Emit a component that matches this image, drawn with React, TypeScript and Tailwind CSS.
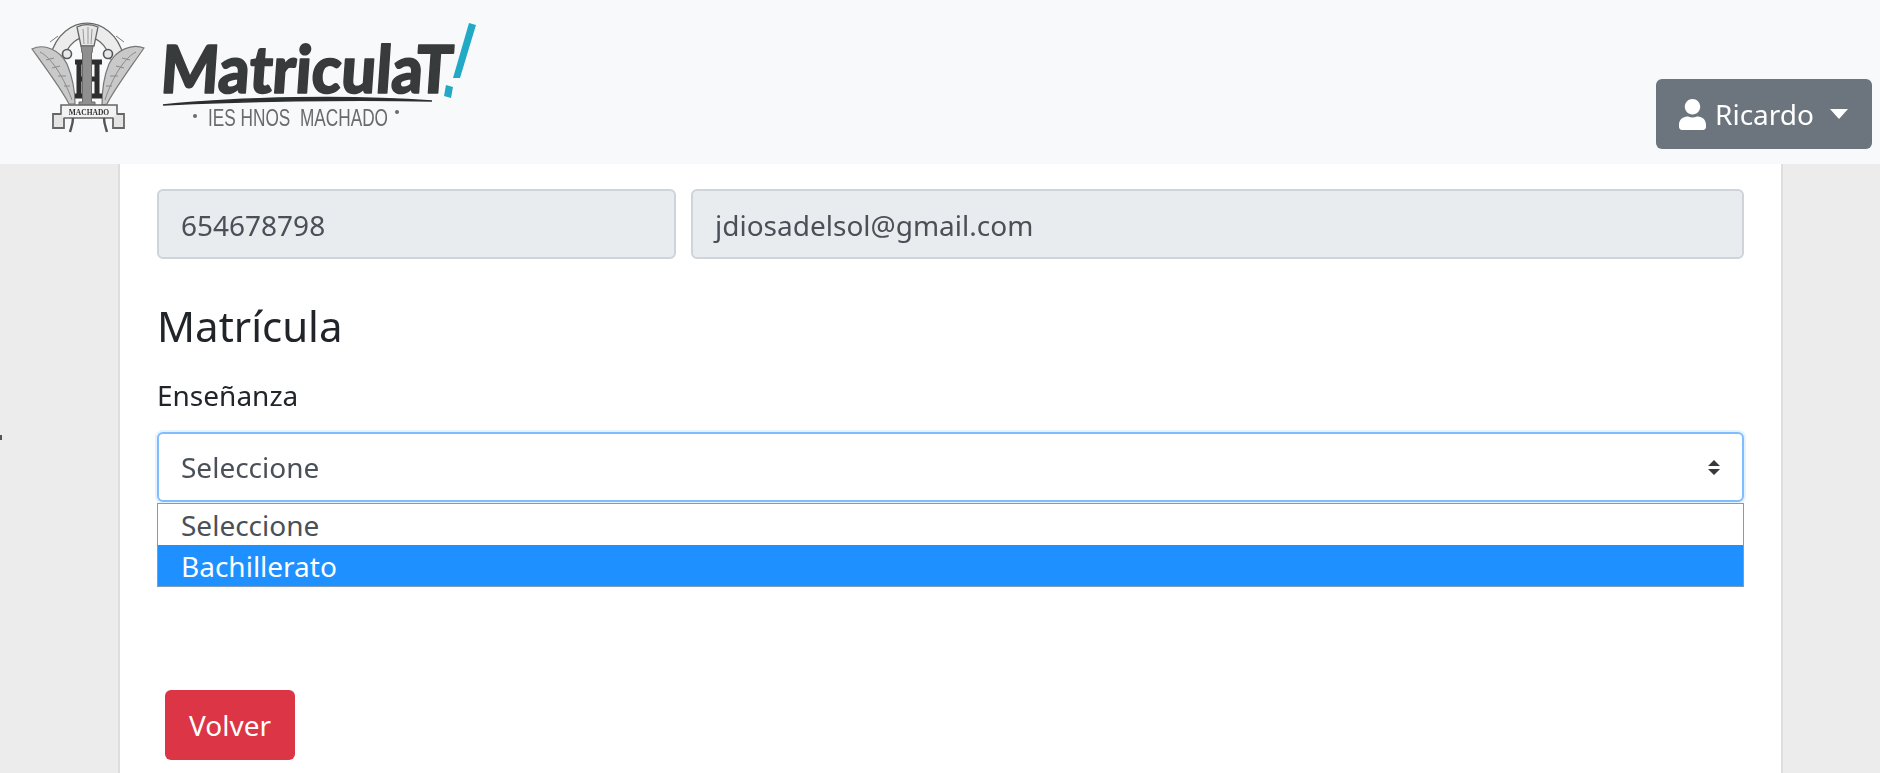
import { FaUser } from "react-icons/fa";

const font = "font-['Noto_Sans','Open_Sans',sans-serif]";

function Logo() {
  return (
    <svg width="490" height="164" viewBox="0 0 490 164" className="block">
      <defs>
        <filter id="soft">
          <feGaussianBlur stdDeviation="0.5" />
        </filter>
      </defs>
      <g filter="url(#soft)">
        {/* escudo */}
        <path d="M57 58 C62 38 76 30 87 30 C98 30 112 38 117 58" fill="none" stroke="#6a6a6a" strokeWidth="15" />
        <path d="M57 58 C62 38 76 30 87 30 C98 30 112 38 117 58" fill="none" stroke="#ececec" strokeWidth="12.5" />
        <path d="M50 42 L58 36 M124 42 L116 36" stroke="#777" strokeWidth="1" />
        <circle cx="67" cy="54" r="4.5" fill="#e8e8e8" stroke="#555" strokeWidth="1.6" />
        <circle cx="108" cy="54" r="4.5" fill="#e8e8e8" stroke="#555" strokeWidth="1.6" />
        <path d="M77 27 C83 24 91 24 98 27 L94 46 L81 46 Z" fill="#e6e6e6" stroke="#666" strokeWidth="1.3" />
        <path d="M83 29 L84 44 M88 27 V44 M92 29 L91 44" stroke="#999" strokeWidth="1" />

        <path d="M32 49 C44 43 60 50 67 64 C72 76 75 90 75 104 L69 104 C62 90 50 74 32 49 Z" fill="#c9c9c9" stroke="#777" strokeWidth="1.2" />
        <path d="M144 48 C132 43 116 50 109 64 C104 76 102 90 102 105 L107 104 C114 90 126 74 144 48 Z" fill="#c9c9c9" stroke="#777" strokeWidth="1.2" />
        <path d="M40 52 C52 58 64 78 72 100 M46 60 L54 58 M52 68 L60 66 M58 76 L66 76 M64 86 L70 86" fill="none" stroke="#8a8a8a" strokeWidth="1" />
        <path d="M136 52 C124 58 112 78 105 100 M130 60 L122 58 M124 68 L116 66 M118 76 L110 76 M112 86 L106 86" fill="none" stroke="#8a8a8a" strokeWidth="1" />

        <path d="M75 62 H85 M75 96 H85 M79 62 V96 M92 62 H102 M92 96 H102 M97 62 V96 M79 79 H97" stroke="#2f2f2f" strokeWidth="5" fill="none" />
        <path d="M81 46 H93 L92 53 H91.5 V102 H95 V106 H79 V102 H82.5 V53 H82 Z" fill="#8f8f8f" stroke="#6a6a6a" strokeWidth="1" />

        <path d="M61 105 H117 V118 H61 Z" fill="#f3f3f3" stroke="#666" strokeWidth="1.6" />
        <path d="M61 114 H53 V128 H64 V118 M117 114 H124 V128 H113 V118" fill="#e4e4e4" stroke="#666" strokeWidth="1.8" />
        <path d="M73 118 C73 124 71 128 70 132 M104 118 C104 124 106 128 107 132" fill="none" stroke="#555" strokeWidth="2.4" />
        <text x="89" y="115" textAnchor="middle" fontFamily="Liberation Serif" fontWeight="700" fontSize="7.5" fill="#333">MACHADO</text>

        {/* letras */}
        <text x="166" y="93" transform="skewX(-4)" fontFamily="Lato" fontWeight="900" fontSize="66" textLength="292" lengthAdjust="spacingAndGlyphs" fill="#383a3a" stroke="#383a3a" strokeWidth="1.6" strokeLinejoin="round">MatriculaT</text>
        <path d="M163 105 C240 97 350 95 432 101 C350 99 240 101 163 105 Z" fill="#2d2f2f" stroke="#2d2f2f" strokeWidth="1.6" />
        <text x="208" y="126" fontFamily="Liberation Sans" fontWeight="400" fontSize="24" textLength="180" lengthAdjust="spacingAndGlyphs" fill="#6a6a6a" xmlSpace="preserve">IES HNOS  MACHADO</text>
        <circle cx="195" cy="116" r="2" fill="#6a6a6a" />
        <circle cx="397" cy="112" r="2" fill="#6a6a6a" />
        <path d="M469 23 L476 25 L460 78 L453 78 Z" fill="#23a9c6" />
        <path d="M446 85 L453 87 L451 98 L444 96 Z" fill="#23a9c6" />
      </g>
    </svg>
  );
}

function SelectArrows() {
  return (
    <svg width="12" height="15" viewBox="0 0 4 5" className="block">
      <path fill="#343a40" d="M2 0L0 2h4zm0 5L0 3h4z" />
    </svg>
  );
}

export default function App() {
  return (
    <div className={`relative h-[773px] overflow-hidden bg-[#ececec] ${font}`}>
      <nav className="flex h-[164px] items-end justify-between bg-[#f8f9fa] pb-[15px] pr-2">
        <div className="self-start">
          <Logo />
        </div>
        <button className="flex h-[70px] w-[216px] items-center rounded-[6px] bg-[#6c757d] pl-[23px] text-[28px] text-white">
          <FaUser className="mr-[9px] h-[31px] w-[27px]" />
          <span>Ricardo</span>
          <span className="ml-auto mr-6 h-0 w-0 border-x-[9px] border-t-[10px] border-x-transparent border-t-white" />
        </button>
      </nav>

      <span className="absolute left-0 top-[435px] h-[5px] w-[2px] border border-[#555]" />

      <main className="ml-[118px] mr-[97px] h-[609px] border-x-2 border-[#dedede] bg-white px-[37px] pt-[25px]">
        <div className="flex gap-[15px]">
          <div className="flex h-[70px] w-[519px] items-center rounded-[6px] border-2 border-[#ced4da] bg-[#e9ecef] pl-[22px] pt-[2px] text-[28px] text-[#495057]">
            654678798
          </div>
          <div className="flex h-[70px] flex-1 items-center rounded-[6px] border-2 border-[#ced4da] bg-[#e9ecef] pl-[22px] pt-[2px] text-[28px] text-[#495057]">
            jdiosadelsol@gmail.com
          </div>
        </div>

        <h2 className="mt-[38px] text-[42px] leading-[58px] text-[#212529]">Matrícula</h2>
        <label className="mt-[22px] block text-[28px] leading-[36px] text-[#212529]">Enseñanza</label>

        <div className="mt-[19px] flex h-[70px] items-center justify-between rounded-[6px] border-2 border-[#80bdff] bg-white pl-[22px] pr-[22px] text-[28px] text-[#495057] shadow-[0_0_0_2px_rgba(0,123,255,0.1)]">
          <span>Seleccione</span>
          <SelectArrows />
        </div>

        <ul className="mt-[1px] border border-[#7f9db9] text-[28px] leading-[43px] text-[#495057]">
          <li className="h-[41px] pl-[23px]">Seleccione</li>
          <li className="h-[41px] bg-[#1e90ff] pl-[23px] text-white">Bachillerato</li>
        </ul>

        <button className="ml-2 mt-[103px] h-[70px] w-[130px] rounded-[6px] bg-[#dc3545] text-[28px] text-white">
          Volver
        </button>
      </main>
    </div>
  );
}
